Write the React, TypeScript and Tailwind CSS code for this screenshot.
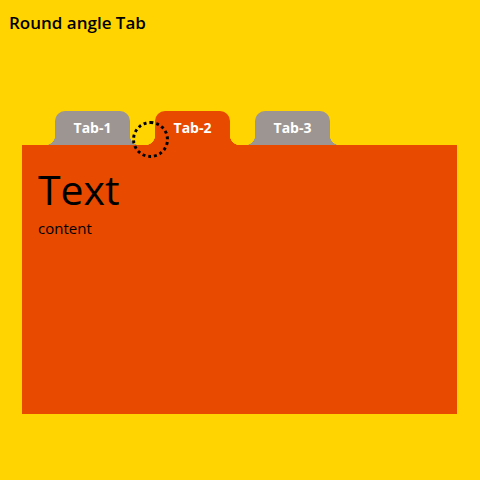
const TABS = [
  { label: "Tab-1", active: false },
  { label: "Tab-2", active: true },
  { label: "Tab-3", active: false },
];

function Tab({ label, active }: { label: string; active: boolean }) {
  return (
    <div className="flex items-end">
      {/* flared bottom corners sit beside the tab body */}
      <span
        className={`w-[10px] h-[10px] ${
          active
            ? "bg-[radial-gradient(circle_at_0_0,transparent_10px,#e84a00_10.5px)]"
            : "bg-[radial-gradient(circle_at_0_0,transparent_10px,#9c9591_10.5px)]"
        }`}
      />
      <div
        className={`w-[75px] h-[34px] rounded-t-[10px] flex items-center justify-center ${
          active ? "bg-[#e84a00]" : "bg-[#9c9591]"
        }`}
      >
        <span className="text-white font-bold text-[14px] pb-[1px]">{label}</span>
      </div>
      <span
        className={`w-[10px] h-[10px] ${
          active
            ? "bg-[radial-gradient(circle_at_100%_0,transparent_10px,#e84a00_10.5px)]"
            : "bg-[radial-gradient(circle_at_100%_0,transparent_10px,#9c9591_10.5px)]"
        }`}
      />
    </div>
  );
}

export default function App() {
  return (
    <div className="w-[480px] h-[480px] bg-[#ffd400] font-['Open_Sans',sans-serif] text-black overflow-hidden">
      <h1 className="pl-[9px] pt-[11px] text-[17px] font-semibold leading-[24px]">Round angle Tab</h1>

      <div className="relative mt-[76px] ml-[45px] flex gap-[5px]">
        {TABS.map((t) => (
          <Tab key={t.label} label={t.label} active={t.active} />
        ))}
        {/* dotted highlight on the rounded joint */}
        <span className="absolute left-[87px] top-[10px] w-[37px] h-[37px] rounded-full border-[3px] border-dotted border-black z-10" />
      </div>

      <div className="ml-[22px] w-[435px] h-[269px] bg-[#e84a00] px-[16px] pt-[18px]">
        <div className="text-[41px] leading-[52px] font-normal">Text</div>
        <div className="text-[15px] font-medium mt-[2px]">content</div>
      </div>
    </div>
  );
}
